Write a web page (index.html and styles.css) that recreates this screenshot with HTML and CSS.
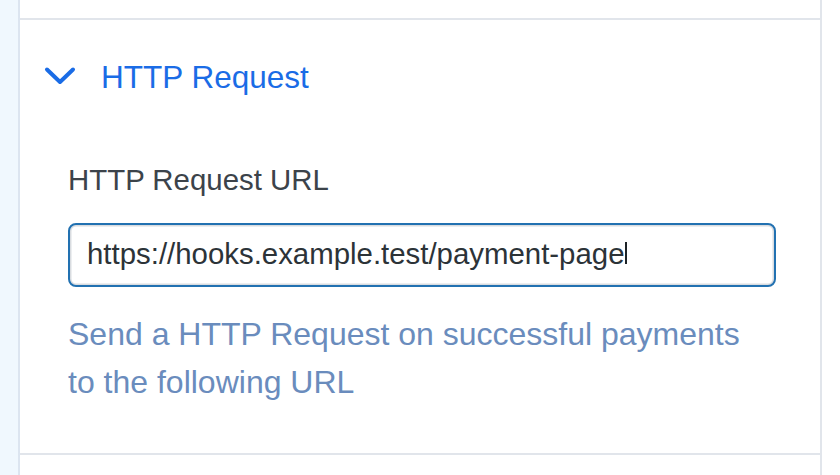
FILE: index.html
```html
<!DOCTYPE html>
<html lang="en">
<head>
<meta charset="utf-8">
<title>HTTP Request</title>
<link rel="stylesheet" href="styles.css">
</head>
<body>
<div class="page">
  <aside class="rail"></aside>
  <main class="panel">
    <div class="panel-prev"></div>
    <section class="accordion">
      <header class="acc-head">
        <svg class="chevron" width="32" height="20" viewBox="0 0 32 20" aria-hidden="true">
          <path d="M3 3.5 L16 16 L29 3.5" fill="none" stroke="#1a6ce6" stroke-width="4" stroke-linecap="round" stroke-linejoin="round"/>
        </svg>
        <h2 class="acc-title">HTTP Request</h2>
      </header>
      <div class="acc-body">
        <label class="field-label">HTTP Request URL</label>
        <div class="field-input"><span class="field-value">https://hooks.example.test/payment-page</span><span class="caret"></span></div>
        <p class="field-help">Send a HTTP Request on successful payments to the following URL</p>
      </div>
    </section>
    <div class="panel-next"></div>
  </main>
</div>
</body>
</html>
```

FILE: styles.css
```css
html, body {
  margin: 0;
  padding: 0;
  background: #ffffff;
}

body {
  font-family: "Liberation Sans", Arial, sans-serif;
}

.page {
  display: flex;
  width: 840px;
  height: 475px;
  overflow: hidden;
}

.rail {
  width: 18px;
  flex: 0 0 18px;
  background: #f0f8fe;
  border-right: 2px solid #dce5f0;
}

.panel {
  width: 800px;
  flex: 0 0 800px;
  border-right: 2px solid #e1e5eb;
  display: flex;
  flex-direction: column;
}

.panel-prev {
  height: 18px;
}

.accordion {
  border-top: 2px solid #e1e5eb;
  border-bottom: 2px solid #e1e5eb;
  padding: 39px 0 47px 0;
}

.acc-head {
  display: flex;
  align-items: center;
  padding-left: 24px;
  gap: 25px;
  height: 36px;
}

.chevron {
  display: block;
  margin-top: -3px;
}

.acc-title {
  margin: 0;
  font-size: 31.5px;
  line-height: 36px;
  font-weight: 400;
  color: #1a6ce6;
}

.acc-body {
  margin-top: 67px;
  padding-left: 48px;
  display: flex;
  flex-direction: column;
}

.field-label {
  font-size: 29.4px;
  line-height: 36px;
  color: #3c434a;
}

.field-input {
  margin-top: 25px;
  width: 708px;
  box-sizing: border-box;
  height: 64px;
  border: 2px solid #2271b1;
  border-radius: 8px;
  box-shadow: inset 0 0 0 1.5px #d9dce0;
  padding: 11px 17px 13px 17px;
  display: flex;
  align-items: center;
  font-size: 29.4px;
  line-height: 36px;
  color: #2c3338;
}

.caret {
  display: inline-block;
  width: 2px;
  height: 22px;
  background: #1d2327;
  margin-left: 0;
  margin-top: -2px;
}

.field-help {
  margin: 23px 0 0 0;
  max-width: 690px;
  font-size: 32px;
  line-height: 48px;
  color: #6a8cbd;
}

.panel-next {
  flex: 1;
}
```
